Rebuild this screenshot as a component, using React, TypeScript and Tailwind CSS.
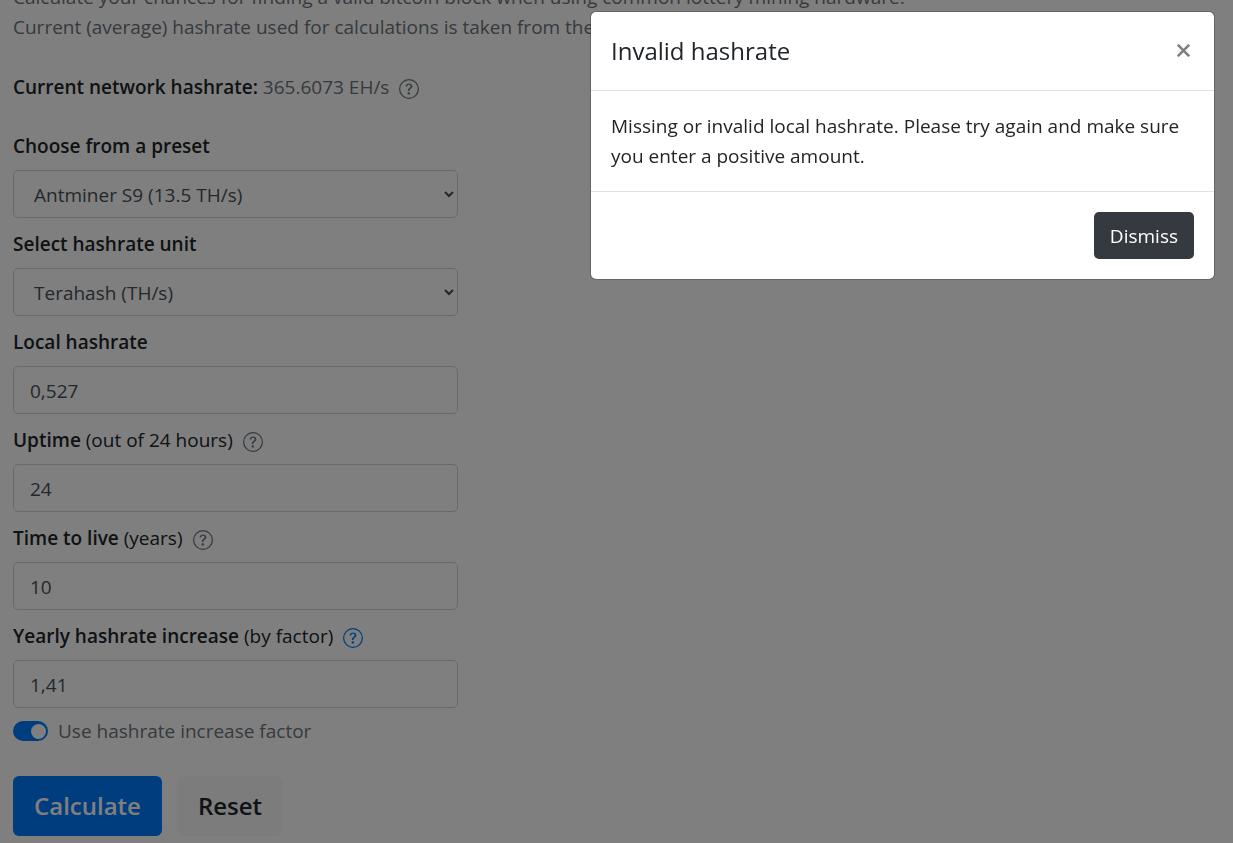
import { useState } from "react";
import type { ReactNode } from "react";
import { BsQuestionCircle } from "react-icons/bs";

const fieldClass =
  "w-full h-12 px-4 pt-0.5 mt-[9px] bg-white border border-[#ced4da] rounded-[5px] text-[#495057]";

function HelpButton({ label, active }: { label: string; active?: boolean }) {
  return (
    <button type="button" aria-label={label} className={active ? "text-[#007bff] ml-2.5 mt-1" : "text-[#6c757d] ml-2.5 mt-1"}>
      <BsQuestionCircle size={20} />
    </button>
  );
}

function Field({ id, label, note, help, helpActive, children }: {
  id: string;
  label: string;
  note?: string;
  help?: string;
  helpActive?: boolean;
  children: ReactNode;
}) {
  return (
    <div className="mb-[11px]">
      <div className="flex items-center h-[30px]">
        <label htmlFor={id}>
          <b className="font-semibold">{label}</b> {note}
        </label>
        {help && <HelpButton label={help} active={helpActive} />}
      </div>
      {children}
    </div>
  );
}

function InvalidHashrateModal({ onClose }: { onClose: () => void }) {
  return (
    <div className="fixed inset-0 bg-black/50 flex justify-end items-start pt-[11px] pr-[18px]">
      <div
        role="dialog"
        aria-modal="true"
        aria-labelledby="modal-title"
        className="w-full max-w-[625px] bg-white bg-clip-padding border border-black/20 rounded-md"
      >
        <div className="flex justify-between items-start p-5 border-b border-[#dee2e6]">
          <h5 id="modal-title" className="text-2xl leading-[38px] font-medium">Invalid hashrate</h5>
          <button type="button" aria-label="Close" onClick={onClose} className="p-1 mt-2 text-[#7f7f7f]">
            <svg width="13" height="13" viewBox="0 0 13 13" stroke="currentColor" strokeWidth="2.6">
              <path d="M0.8 0.8 12.2 12.2M12.2 0.8 0.8 12.2" />
            </svg>
          </button>
        </div>
        <p className="p-5">
          Missing or invalid local hashrate. Please try again and make sure you enter a positive amount.
        </p>
        <div className="flex justify-end p-5 border-t border-[#dee2e6]">
          <button type="button" onClick={onClose} className="h-[47px] px-4 bg-[#343a40] text-white font-medium rounded-[5px]">
            Dismiss
          </button>
        </div>
      </div>
    </div>
  );
}

export default function App() {
  const [open, setOpen] = useState(true);

  return (
    <div className="min-h-screen overflow-hidden bg-white font-['Open_Sans',sans-serif] text-[19px] leading-[30px] text-[#212529]">
      <main className="-mt-[18px] px-[13px] pb-2">
        <p className="text-[#6c757d]">
          Calculate your chances for finding a valid bitcoin block when using common lottery mining hardware.
          <br />
          Current (average) hashrate used for calculations is taken from the
        </p>

        <div className="flex items-center h-[30px] mt-[30px] mb-[29px]">
          <p>
            <b className="font-semibold">Current network hashrate:</b> <span className="text-[#6c757d]">365.6073 EH/s</span>
          </p>
          <HelpButton label="About the network hashrate" />
        </div>

        <form className="max-w-[445px]" onSubmit={(e) => e.preventDefault()}>
          <Field id="preset" label="Choose from a preset">
            <select id="preset" className={fieldClass}>
              <option>Antminer S9 (13.5 TH/s)</option>
            </select>
          </Field>
          <Field id="unit" label="Select hashrate unit">
            <select id="unit" className={fieldClass}>
              <option>Terahash (TH/s)</option>
            </select>
          </Field>
          <Field id="local" label="Local hashrate">
            <input id="local" type="text" defaultValue="0,527" className={fieldClass} />
          </Field>
          <Field id="uptime" label="Uptime" note="(out of 24 hours)" help="About uptime">
            <input id="uptime" type="text" defaultValue="24" className={fieldClass} />
          </Field>
          <Field id="ttl" label="Time to live" note="(years)" help="About time to live">
            <input id="ttl" type="text" defaultValue="10" className={fieldClass} />
          </Field>
          <Field id="increase" label="Yearly hashrate increase" note="(by factor)" help="About the increase factor" helpActive>
            <input id="increase" type="text" defaultValue="1,41" className={fieldClass} />
          </Field>

          <div className="flex items-center gap-2.5 h-[30px] -mt-[3px] text-[#6c757d]">
            <input
              id="use-factor"
              type="checkbox"
              defaultChecked
              className="appearance-none flex items-center w-[35px] h-5 px-0.5 rounded-full bg-[#adb5bd] checked:bg-[#007bff] checked:justify-end before:size-[15px] before:rounded-full before:bg-white"
            />
            <label htmlFor="use-factor">Use hashrate increase factor</label>
          </div>

          <div className="flex gap-[15px] mt-[30px] text-2xl font-semibold">
            <button type="submit" className="h-[60px] px-[21px] rounded-md bg-[#007bff] text-white">Calculate</button>
            <button type="reset" className="h-[60px] px-[21px] rounded-md bg-[#f8f9fa]">Reset</button>
          </div>
        </form>
      </main>

      {open && <InvalidHashrateModal onClose={() => setOpen(false)} />}
    </div>
  );
}
